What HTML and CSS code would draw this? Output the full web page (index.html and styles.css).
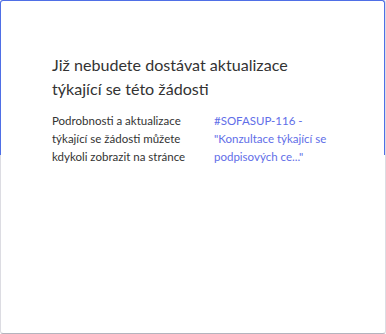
FILE: index.html
```html
<!DOCTYPE html>
<html lang="cs">
<head>
    <meta charset="UTF-8">
    <meta name="viewport" content="width=device-width, initial-scale=1.0">
    <title>Odběr zrušen</title>
    <link rel="stylesheet" href="styles.css">
</head>
<body>
    <div class="card">
        <div class="content">
            <h1>Již nebudete dostávat aktualizace týkající se této žádosti</h1>

            <div class="details">
                <p class="info">Podrobnosti a aktualizace týkající se žádosti můžete kdykoli zobrazit na stránce</p>
                <a class="request-link" href="#">#SOFASUP-116 - "Konzultace týkající se podpisových ce..."</a>
            </div>
        </div>
    </div>
</body>
</html>
```

FILE: styles.css
```css
body {
    margin: 0;
    font-family: 'Lato', 'Noto Sans', sans-serif;
    color: #333;
    background-color: #fff;
}
.card {
    position: relative;
    box-sizing: border-box;
    width: 386px;
    height: 334px;
    border: 1px solid #dcdce2;
    border-bottom-color: #b4b4be;
    border-radius: 3px;
    background-color: white;
}
/* focus ring over the top of the card */
.card::before {
    content: "";
    position: absolute;
    top: -1px;
    left: -1px;
    right: 0;
    height: 154px;
    border: 1px solid #4f6fe6;
    border-bottom: none;
    border-radius: 3px 3px 0 0;
    pointer-events: none;
}
.content {
    padding: 52px 51px 0;
}
h1 {
    margin: 0 0 11px;
    font-size: 16.1px;
    font-weight: normal;
    line-height: 24px;
    color: #333;
    width: 250px;
}
.details {
    display: grid;
    grid-template-columns: 150px 125px;
    column-gap: 12px;
    font-size: 11.5px;
    line-height: 18px;
}
.info {
    margin: 0;
    width: 140px;
}
.request-link {
    color: #5f6ee8;
    text-decoration: none;
}
```
